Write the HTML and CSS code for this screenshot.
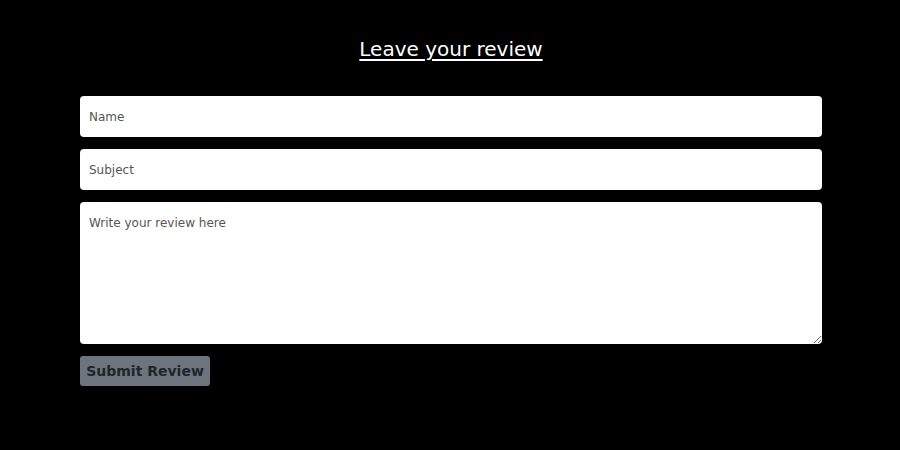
FILE: index.html
```html
<!DOCTYPE html>
<html>
<head>
<meta charset="utf-8">
<link rel="stylesheet" href="styles.css">
</head>
<body>
<main class="page">
  <h1 class="title">Leave your review</h1>
  <form class="review-form">
    <input class="field" type="text" placeholder="Name">
    <input class="field" type="text" placeholder="Subject">
    <textarea class="field area" placeholder="Write your review here"></textarea>
    <div class="actions"><button type="button" class="submit">Submit Review</button></div>
  </form>
</main>
</body>
</html>
```

FILE: styles.css
```css
html, body {
  margin: 0;
  padding: 0;
  background: #000;
  font-family: "DejaVu Sans", "Open Sans", sans-serif;
}
.page {
  width: 742px;
  margin-left: 80px;
  padding-top: 36px;
}
.title {
  margin: 0 0 34px 0;
  text-align: center;
  color: #fff;
  font-weight: 400;
  font-size: 20px;
  line-height: 26px;
  text-decoration: underline;
  text-underline-offset: 3px;
  text-decoration-thickness: 1.5px;
}
.review-form {
  display: flex;
  flex-direction: column;
  gap: 12px;
}
.field {
  box-sizing: border-box;
  width: 100%;
  height: 41px;
  border: none;
  border-radius: 4px;
  background: #fff;
  padding: 0 9px;
  font-family: inherit;
  font-size: 12px;
  color: #333;
  outline: none;
  margin: 0;
  display: block;
}
.field::placeholder {
  color: #555;
}
.area {
  height: 142px;
  padding: 14px 9px 12px;
  resize: vertical;
}
.submit {
  box-sizing: border-box;
  width: 130px;
  height: 30px;
  border: none;
  border-radius: 3px;
  background: #6c757d;
  color: #212529;
  font-family: inherit;
  font-weight: 700;
  font-size: 14px;
  padding: 0;
}
```
